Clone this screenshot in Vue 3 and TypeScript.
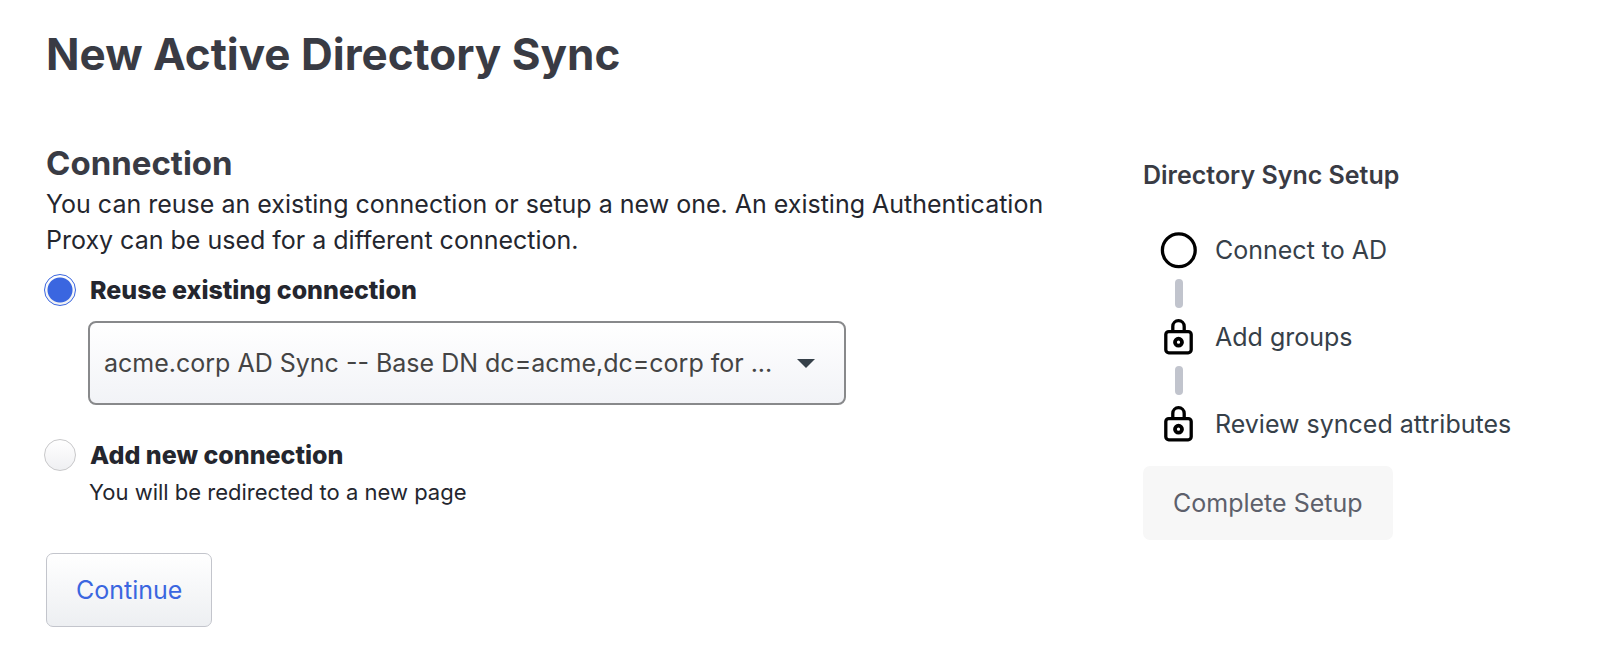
<script setup lang="ts">
import { ref } from 'vue'

interface Step {
  label: string
  icon: 'circle' | 'lock'
}

const mode = ref<'reuse' | 'new'>('reuse')
const connection = ref('acme')
const connections = [
  { id: 'acme', name: 'acme.corp AD Sync -- Base DN dc=acme,dc=corp for ...' },
]
const steps: Step[] = [
  { label: 'Connect to AD', icon: 'circle' },
  { label: 'Add groups', icon: 'lock' },
  { label: 'Review synced attributes', icon: 'lock' },
]
</script>

<template>
  <div class="page">
    <h1 class="title">New Active Directory Sync</h1>
    <div class="columns">
      <main class="connection">
        <h2 class="heading">Connection</h2>
        <p class="intro">
          You can reuse an existing connection or setup a new one. An existing Authentication
          Proxy can be used for a different connection.
        </p>

        <div class="option">
          <input id="mode-reuse" v-model="mode" class="radio" type="radio" name="mode" value="reuse" />
          <label class="option-label" for="mode-reuse">Reuse existing connection</label>
        </div>
        <div class="select-wrap">
          <select v-model="connection" class="select" aria-label="Existing connection">
            <option v-for="c in connections" :key="c.id" :value="c.id">{{ c.name }}</option>
          </select>
          <svg class="caret" viewBox="0 0 18 9" aria-hidden="true"><path d="M0 0h18L9 9z" /></svg>
        </div>

        <div class="option">
          <input
            id="mode-new"
            v-model="mode"
            class="radio"
            type="radio"
            name="mode"
            value="new"
            aria-describedby="mode-new-hint"
          />
          <label class="option-label" for="mode-new">Add new connection</label>
        </div>
        <p id="mode-new-hint" class="hint">You will be redirected to a new page</p>

        <button class="button primary" type="button">Continue</button>
      </main>

      <aside class="setup">
        <h3 class="setup-title">Directory Sync Setup</h3>
        <ol class="steps">
          <li v-for="step in steps" :key="step.label" class="step">
            <svg v-if="step.icon === 'circle'" class="icon" viewBox="0 0 36 36" aria-hidden="true">
              <circle cx="17.8" cy="18.3" r="16.4" />
            </svg>
            <svg v-else class="icon" viewBox="0 0 36 36" aria-hidden="true">
              <rect x="4.8" y="12.6" width="25.4" height="21.2" rx="3" />
              <path d="M11.8 13V7.4a5.7 5.7 0 0 1 11.4 0V13" />
              <circle cx="17.5" cy="23.2" r="3.5" stroke-width="3.8" />
            </svg>
            <span>{{ step.label }}</span>
          </li>
        </ol>
        <button class="button complete" type="button" disabled>Complete Setup</button>
      </aside>
    </div>
  </div>
</template>

<style>
body {
  margin: 0;
  background: #fff;
}
</style>

<style scoped>
.page {
  padding: 24px 45px 40px 46px;
  font-family: Inter, 'Liberation Sans', sans-serif;
  font-size: 25px;
  line-height: 36px;
  color: #24262e;
}

.title,
.heading,
.setup-title,
.intro,
.hint {
  margin: 0;
}

.title {
  font-size: 44px;
  line-height: 60px;
  font-weight: 700;
  color: #393b44;
}

.columns {
  display: grid;
  grid-template-columns: minmax(0, 1fr) 412px;
  gap: 40px;
  padding-top: 60px;
}

.heading {
  padding-bottom: 4px;
  font-size: 33px;
  line-height: 38px;
  font-weight: 700;
  color: #393b44;
}

.option {
  display: flex;
  align-items: center;
  gap: 14px;
  height: 36px;
  margin: 14px 0 0 -2px;
}

.radio {
  appearance: none;
  flex: none;
  box-sizing: border-box;
  width: 32px;
  height: 32px;
  margin: 0;
  border: 1px solid #c8c8ca;
  border-radius: 50%;
  background: linear-gradient(#fff, #eff0f2);
}

.radio:checked {
  border-color: #3a66e0;
  background: radial-gradient(circle, #3a66e0 12px, transparent 13px), linear-gradient(#fff, #eff0f2);
}

.option-label {
  font-weight: 800;
}

.select-wrap {
  display: grid;
  align-items: center;
  max-width: 758px;
  margin: 13px 0 32px 42px;
}

.select {
  appearance: none;
  grid-area: 1 / 1;
  box-sizing: border-box;
  width: 100%;
  height: 84px;
  padding: 0 60px 0 14px;
  border: 2px solid #88898b;
  border-radius: 8px;
  background: linear-gradient(#fff, #f2f3f7);
  font: inherit;
  color: #444;
}

.caret {
  grid-area: 1 / 1;
  justify-self: end;
  width: 18px;
  height: 9px;
  margin-right: 31px;
  fill: #364049;
  pointer-events: none;
}

.hint {
  margin: 1px 0 0 43px;
  font-size: 22px;
}

.button {
  box-sizing: border-box;
  height: 74px;
  padding: 0 29px;
  border: 1px solid transparent;
  border-radius: 7px;
  font: inherit;
}

.primary {
  margin-top: 43px;
  border-color: #c3c5cc;
  background: linear-gradient(#fff, #edeff2);
  color: #3a66e0;
}

.setup {
  padding-top: 13px;
}

.setup-title {
  font-size: 25px;
  line-height: 36px;
  font-weight: 600;
  color: #393b44;
}

.steps {
  display: flex;
  flex-direction: column;
  gap: 51px;
  margin: 0;
  padding: 39px 0 24px 18px;
  list-style: none;
}

.step {
  position: relative;
  display: flex;
  align-items: center;
  gap: 18px;
  height: 36px;
  color: #364049;
}

.step + .step::before {
  content: '';
  position: absolute;
  left: 14px;
  bottom: 47px;
  width: 8px;
  height: 29px;
  border-radius: 4px;
  background: #c1c4cd;
}

.icon {
  flex: none;
  width: 36px;
  height: 36px;
  overflow: visible;
  fill: none;
  stroke: #000;
  stroke-width: 3.3;
}

.complete {
  background: #f7f7f7;
  color: #5d606b;
}
</style>
